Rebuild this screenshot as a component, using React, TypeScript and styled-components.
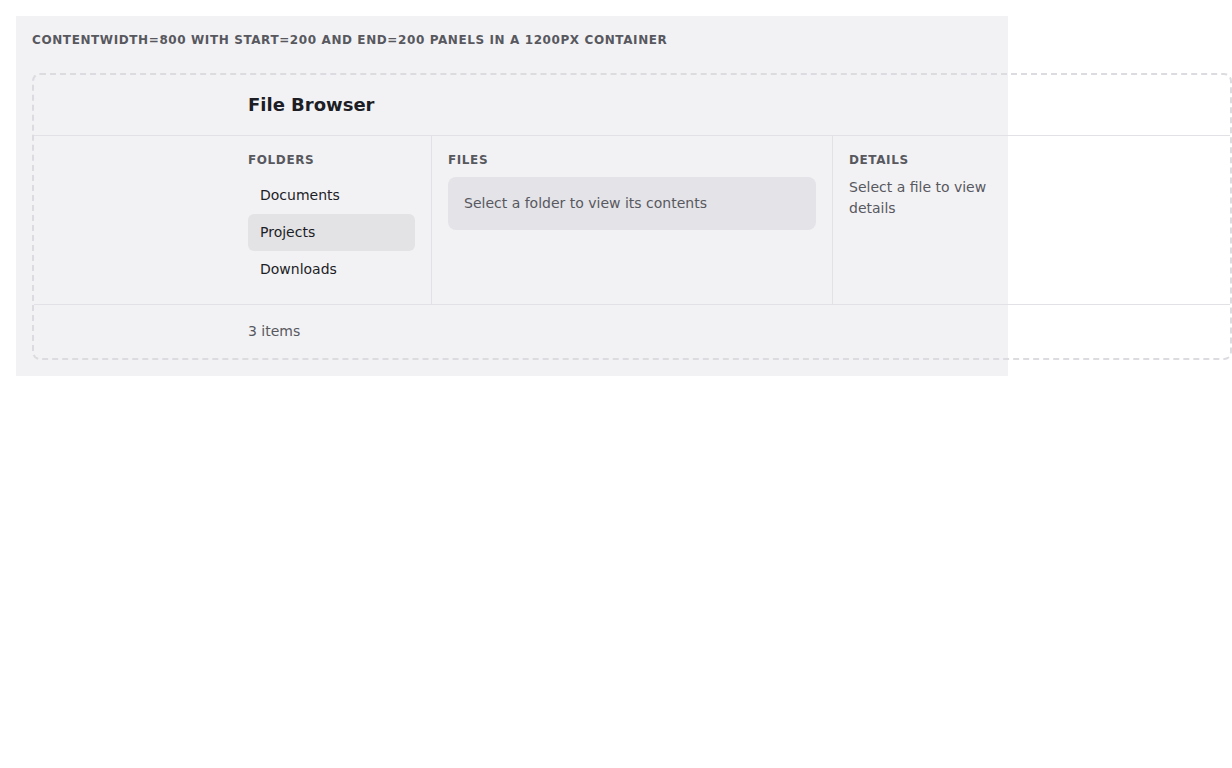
import styled, { createGlobalStyle } from "styled-components";

const GlobalStyle = createGlobalStyle`
  * {
    box-sizing: border-box;
  }
  body {
    margin: 0;
    background: #ffffff;
    font-family: "DejaVu Sans", "Noto Sans", sans-serif;
    color: #1d1d26;
  }
`;

const folders = ["Documents", "Projects", "Downloads"];

function App() {
  const selected = "Projects";

  return (
    <>
      <GlobalStyle />
      <Page>
        <Caption>
          contentWidth=800 with start=200 and end=200 panels in a 1200px container
        </Caption>
        <Frame>
          <HeaderRow>
            <Spacer />
            <Title>File Browser</Title>
            <Spacer />
          </HeaderRow>
          <BodyRow>
            <Spacer />
            <Columns>
              <FolderPane>
                <PaneLabel>Folders</PaneLabel>
                <FolderList>
                  {folders.map((name) => (
                    <FolderItem key={name} $active={name === selected}>
                      {name}
                    </FolderItem>
                  ))}
                </FolderList>
              </FolderPane>
              <FilePane>
                <PaneLabel>Files</PaneLabel>
                <EmptyBox>Select a folder to view its contents</EmptyBox>
              </FilePane>
              <DetailPane>
                <PaneLabel>Details</PaneLabel>
                <Muted>Select a file to view details</Muted>
              </DetailPane>
            </Columns>
            <Spacer />
          </BodyRow>
          <FooterRow>
            <Spacer />
            <Status>3 items</Status>
            <Spacer />
          </FooterRow>
        </Frame>
      </Page>
    </>
  );
}

const Page = styled.div`
  margin: 16px;
  width: 992px;
  padding: 16px;
  background: #f2f2f4;
`;

const Caption = styled.div`
  font-size: 12px;
  line-height: 17px;
  font-weight: 700;
  letter-spacing: 0.6px;
  text-transform: uppercase;
  color: #58585f;
  margin-bottom: 24px;
`;

const Frame = styled.div`
  width: 1200px;
  border: 2px dashed #dcdce0;
  border-radius: 8px;
`;

const Row = styled.div`
  display: grid;
  grid-template-columns: 198px 800px 1fr;
`;

const HeaderRow = styled(Row)`
  border-bottom: 1px solid #e2e2e6;
`;

const BodyRow = styled(Row)`
  border-bottom: 1px solid #e2e2e6;
`;

const FooterRow = styled(Row)``;

const Spacer = styled.div``;

const Title = styled.h1`
  margin: 0;
  padding: 16px;
  font-size: 18px;
  line-height: 28px;
  font-weight: 700;
  color: #1d1d26;
`;

const Columns = styled.div`
  display: grid;
  grid-template-columns: 200px 1fr 200px;
`;

const Pane = styled.div`
  padding: 16px;
`;

const FolderPane = styled(Pane)`
  border-right: 1px solid #e2e2e6;
`;

const FilePane = styled(Pane)``;

const DetailPane = styled(Pane)`
  border-left: 1px solid #e2e2e6;
`;

const PaneLabel = styled.div`
  font-size: 12px;
  line-height: 17px;
  font-weight: 700;
  letter-spacing: 0.6px;
  text-transform: uppercase;
  color: #58585f;
  margin-bottom: 8px;
`;

const FolderList = styled.div`
  display: flex;
  flex-direction: column;
`;

const FolderItem = styled.div<{ $active?: boolean }>`
  padding: 8px 12px;
  font-size: 14px;
  line-height: 21px;
  border-radius: 6px;
  color: #1d1d26;
  background: ${(p) => (p.$active ? "#e3e3e5" : "transparent")};
`;

const EmptyBox = styled.div`
  padding: 16px;
  border-radius: 8px;
  background: #e3e3e8;
  font-size: 14px;
  line-height: 21px;
  color: #58585f;
`;

const Muted = styled.div`
  font-size: 14px;
  line-height: 21px;
  color: #58585f;
`;

const Status = styled.div`
  padding: 16px;
  font-size: 14px;
  line-height: 21px;
  color: #58585f;
`;

export default App;
